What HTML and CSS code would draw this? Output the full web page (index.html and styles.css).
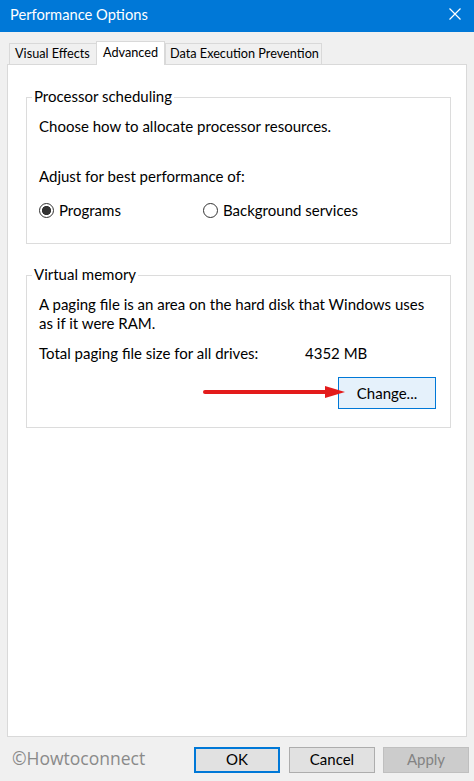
FILE: index.html
```html
<!DOCTYPE html>
<html lang="en">
<head>
<meta charset="utf-8">
<title>Performance Options</title>
<link rel="stylesheet" href="styles.css">
</head>
<body>
<div class="window">
  <div class="titlebar">
    <span class="title">Performance Options</span>
    <svg class="close" width="12" height="12" viewBox="0 0 12 12" aria-hidden="true"><path d="M0.5 0.5L11.5 11.5M11.5 0.5L0.5 11.5" stroke="#fff" stroke-width="1.2" fill="none"/></svg>
  </div>
  <div class="tabs">
    <div class="tab tab-ve">Visual Effects</div>
    <div class="tab tab-adv">Advanced</div>
    <div class="tab tab-dep">Data Execution Prevention</div>
  </div>
  <div class="panel">
    <fieldset class="group group-proc">
      <legend>Processor scheduling</legend>
      <p class="line">Choose how to allocate processor resources.</p>
      <p class="line adjust">Adjust for best performance of:</p>
      <div class="radios">
        <label class="radio radio-first"><span class="dot checked"></span>Programs</label>
        <label class="radio"><span class="dot"></span>Background services</label>
      </div>
    </fieldset>
    <fieldset class="group group-vm">
      <legend>Virtual memory</legend>
      <p class="line">A paging file is an area on the hard disk that Windows uses<br>as if it were RAM.</p>
      <div class="total"><span class="total-label">Total paging file size for all drives:</span><span>4352 MB</span></div>
      <div class="change-row">
        <svg class="arrow" width="144" height="14" viewBox="0 0 144 14" aria-hidden="true">
          <line x1="2" y1="7" x2="126" y2="7" stroke="#e31b1b" stroke-width="4" stroke-linecap="round"/>
          <polygon points="122,1 142,7 122,13" fill="#e31b1b"/>
        </svg>
        <button class="change">Change...</button>
      </div>
    </fieldset>
  </div>
  <div class="footer">
    <span class="watermark">©Howtoconnect</span>
    <button class="dlg ok">OK</button>
    <button class="dlg cancel">Cancel</button>
    <button class="dlg apply">Apply</button>
  </div>
</div>
</body>
</html>
```
FILE: styles.css
```css
body {
  margin: 0;
  background: #f0f0f0;
  font-family: Lato, "Segoe UI", "Noto Sans", sans-serif;
  font-size: 15px;
  color: #000;
}

.window {
  width: 474px;
  height: 781px;
  overflow: hidden;
  background: #f0f0f0;
}

.titlebar {
  height: 32px;
  box-sizing: border-box;
  background: #0078d7;
  display: flex;
  align-items: flex-start;
  justify-content: space-between;
  padding: 0 13px 0 10px;
}

.title {
  color: #fff;
  font-size: 14.7px;
  line-height: 18px;
  margin-top: 5px;
}

.close {
  margin-top: 8px;
}

.tabs {
  height: 32px;
  box-sizing: border-box;
  display: flex;
  align-items: flex-end;
  padding-left: 9px;
  position: relative;
  z-index: 1;
  font-size: 12.7px;
}

.tab {
  box-sizing: border-box;
  height: 21px;
  border: 1px solid #d9d9d9;
  border-bottom: none;
  background: #f0f0f0;
  line-height: 19px;
  white-space: nowrap;
}

.tab-ve {
  width: 88px;
  padding-left: 5px;
}

.tab-adv {
  position: relative;
  width: 69px;
  height: 24px;
  margin-left: -1px;
  margin-bottom: -1px;
  background: #fff;
  line-height: 20px;
  padding-left: 6px;
}

.tab-dep {
  width: 157px;
  padding-left: 4px;
}

.panel {
  margin-left: 7px;
  width: 460px;
  height: 673px;
  box-sizing: border-box;
  border: 1px solid #d9d9d9;
  background: #fff;
  padding: 0 15px 0 18px;
  display: flow-root;
}

.group {
  margin: 0;
  border: 1px solid #dcdcdc;
  padding: 10px 14px 0 12px;
  min-width: 0;
}

.group legend {
  padding: 0 2px 2px;
  margin-left: -7px;
  line-height: 18px;
}

.group-proc {
  margin-top: 22px;
  padding-bottom: 23px;
}

.group-vm {
  margin-top: 21px;
  padding-bottom: 18px;
}

.line {
  margin: 0;
  line-height: 19px;
}

.adjust {
  margin-top: 31px;
}

.radios {
  margin-top: 15px;
  display: flex;
  line-height: 19px;
}

.radio {
  display: flex;
  align-items: center;
}

.radio-first {
  width: 164px;
}

.dot {
  width: 15px;
  height: 15px;
  box-sizing: border-box;
  border: 1px solid #333;
  border-radius: 50%;
  margin-right: 5px;
  background: #fff;
}

.dot.checked {
  background: radial-gradient(circle, #333 0 4.3px, #fff 4.8px);
}

.total {
  margin-top: 11px;
  display: flex;
  line-height: 19px;
}

.total-label {
  width: 266px;
}

.change-row {
  position: relative;
  margin-top: 14px;
  display: flex;
  justify-content: flex-end;
}

.arrow {
  position: absolute;
  left: 164px;
  top: 8px;
}

.change {
  width: 98px;
  height: 32px;
  box-sizing: border-box;
  border: 1px solid #0078d7;
  background: #e5f1fb;
  font: inherit;
  color: #000;
  padding: 0;
}

.footer {
  display: flex;
  margin-top: 10px;
  height: 26px;
  padding-left: 12px;
}

.watermark {
  font-family: "Open Sans", sans-serif;
  font-size: 17.5px;
  color: #8a8a8a;
  line-height: 22px;
  width: 182px;
  white-space: nowrap;
}

.dlg {
  width: 86px;
  height: 26px;
  box-sizing: border-box;
  border: 1px solid #adadad;
  background: #e1e1e1;
  font: inherit;
  color: #000;
  padding: 0 0 2px;
}

.ok {
  border: 2px solid #0078d7;
}

.cancel {
  margin-left: 9px;
}

.apply {
  margin-left: 8px;
  background: #cccccc;
  border-color: #bfbfbf;
  color: #838383;
}
```
